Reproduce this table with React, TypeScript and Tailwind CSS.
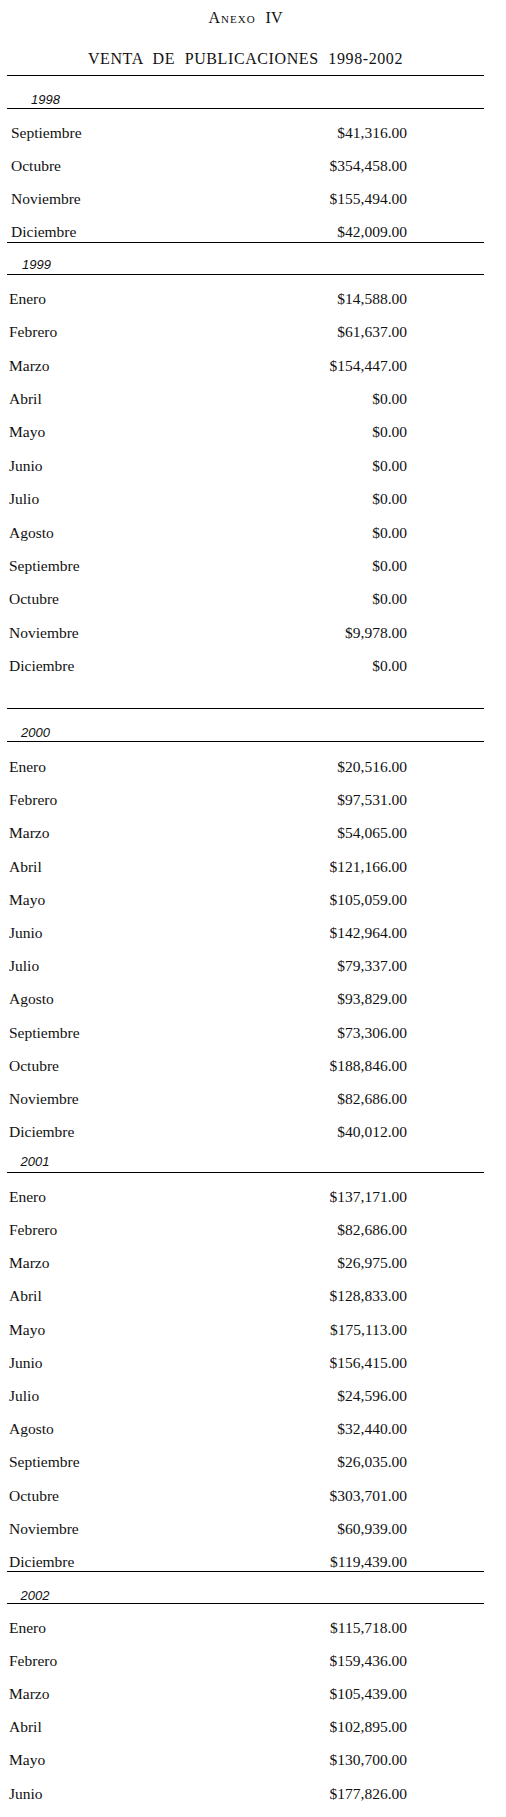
import React from "react";

type Row = [string, string];

const y1998: Row[] = [
  ["Septiembre", "$41,316.00"],
  ["Octubre", "$354,458.00"],
  ["Noviembre", "$155,494.00"],
  ["Diciembre", "$42,009.00"],
];

const y1999: Row[] = [
  ["Enero", "$14,588.00"],
  ["Febrero", "$61,637.00"],
  ["Marzo", "$154,447.00"],
  ["Abril", "$0.00"],
  ["Mayo", "$0.00"],
  ["Junio", "$0.00"],
  ["Julio", "$0.00"],
  ["Agosto", "$0.00"],
  ["Septiembre", "$0.00"],
  ["Octubre", "$0.00"],
  ["Noviembre", "$9,978.00"],
  ["Diciembre", "$0.00"],
];

const y2000: Row[] = [
  ["Enero", "$20,516.00"],
  ["Febrero", "$97,531.00"],
  ["Marzo", "$54,065.00"],
  ["Abril", "$121,166.00"],
  ["Mayo", "$105,059.00"],
  ["Junio", "$142,964.00"],
  ["Julio", "$79,337.00"],
  ["Agosto", "$93,829.00"],
  ["Septiembre", "$73,306.00"],
  ["Octubre", "$188,846.00"],
  ["Noviembre", "$82,686.00"],
  ["Diciembre", "$40,012.00"],
];

const y2001: Row[] = [
  ["Enero", "$137,171.00"],
  ["Febrero", "$82,686.00"],
  ["Marzo", "$26,975.00"],
  ["Abril", "$128,833.00"],
  ["Mayo", "$175,113.00"],
  ["Junio", "$156,415.00"],
  ["Julio", "$24,596.00"],
  ["Agosto", "$32,440.00"],
  ["Septiembre", "$26,035.00"],
  ["Octubre", "$303,701.00"],
  ["Noviembre", "$60,939.00"],
  ["Diciembre", "$119,439.00"],
];

const y2002: Row[] = [
  ["Enero", "$115,718.00"],
  ["Febrero", "$159,436.00"],
  ["Marzo", "$105,439.00"],
  ["Abril", "$102,895.00"],
  ["Mayo", "$130,700.00"],
  ["Junio", "$177,826.00"],
];

function Line() {
  return <div className="h-px w-full bg-black" />;
}

function DataRow({ r, h, pl }: { r: Row; h: string; pl: string }) {
  const lead = h === "h-[33.36px]" ? "leading-[33.36px]" : "leading-[33.2px]";
  return (
    <div className={`flex w-[400px] items-start ${h} ${pl}`}>
      <span className={`flex-1 whitespace-nowrap ${lead}`}>{r[0]}</span>
      <span className={`whitespace-nowrap ${lead}`}>{r[1]}</span>
    </div>
  );
}

function Label({ text, cls }: { text: string; cls: string }) {
  return (
    <div
      className={`font-['Liberation_Sans',Arial,sans-serif] text-[13px] italic leading-[16px] ${cls}`}
    >
      {text}
    </div>
  );
}

export default function App() {
  return (
    <div className="min-h-[1817px] w-[506px] bg-white text-[#111] font-['Liberation_Serif','Times_New_Roman',serif] text-[15.5px]">
      <div className="mx-[7px] w-[477px]">
        <div className="flex h-[75px] flex-col items-center">
          <div className="pt-[6px] text-[16px] leading-[24px] [font-variant:small-caps] tracking-[1px]">
            Anexo<span className="ml-[10px] tracking-normal">IV</span>
          </div>
          <div className="mt-[17px] text-[16px] leading-[24px] tracking-[0.6px] [word-spacing:5px]">
            VENTA DE PUBLICACIONES 1998-2002
          </div>
        </div>
        <Line />
        <Label text="1998" cls="h-[32px] pt-[15.5px] pl-[24px]" />
        <Line />
        <div className="h-[7px]" />
        {y1998.map((r, i) => (
          <DataRow key={i} r={r} h={i === 3 ? "h-[27px]" : "h-[33px]"} pl="pl-[4px]" />
        ))}
        <Line />
        <Label text="1999" cls="h-[31px] pt-[13.5px] pl-[15px]" />
        <Line />
        <div className="h-[7px]" />
        {y1999.map((r, i) => (
          <DataRow key={i} r={r} h="h-[33.36px]" pl="pl-[2px]" />
        ))}
        <div className="h-[25.7px]" />
        <Line />
        <Label text="2000" cls="h-[32px] pt-[16px] pl-[14px]" />
        <Line />
        <div className="h-[8px]" />
        {y2000.map((r, i) => (
          <DataRow key={i} r={r} h="h-[33.2px]" pl="pl-[2px]" />
        ))}
        <Label text="2001" cls="h-[23.6px] pt-[6px] pl-[13.5px]" />
        <Line />
        <div className="h-[7px]" />
        {y2001.map((r, i) => (
          <DataRow key={i} r={r} h={i === 11 ? "h-[25.8px]" : "h-[33.2px]"} pl="pl-[2px]" />
        ))}
        <Line />
        <Label text="2002" cls="h-[31px] pt-[16px] pl-[13.5px]" />
        <Line />
        <div className="h-[7px]" />
        {y2002.map((r, i) => (
          <DataRow key={i} r={r} h="h-[33.2px]" pl="pl-[2px]" />
        ))}
      </div>
    </div>
  );
}
